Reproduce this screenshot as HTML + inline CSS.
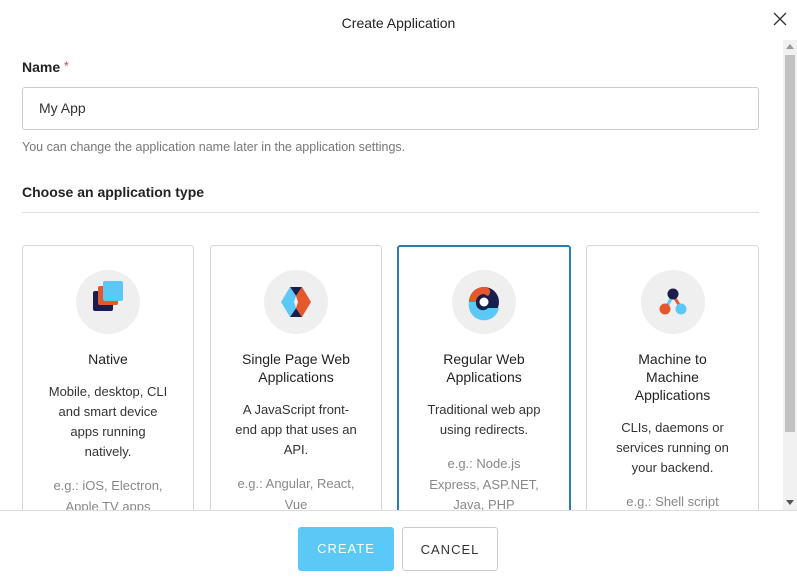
<!DOCTYPE html>
<html><head><style>
*{box-sizing:border-box;margin:0;padding:0}
body{width:797px;height:585px;background:#fff;font-family:"Liberation Sans",sans-serif;color:#333;position:relative;overflow:hidden}
.title{position:absolute;top:15px;left:0;width:797px;text-align:center;font-size:14px;color:#222}
.close{position:absolute;left:773px;top:12px}
.scroll{position:absolute;left:783px;top:40px;width:14px;height:470px;background:#f1f1f1}
.thumb{position:absolute;left:2px;top:15px;width:10px;height:377px;background:#c1c1c1}
.content{position:absolute;left:0;top:0;width:783px;height:510px;overflow:hidden}
.lbl{position:absolute;left:22px;top:59px;font-size:14px;font-weight:bold;color:#222}
.lbl span{color:#e53935;font-weight:normal;font-size:12px;vertical-align:top}
.input{position:absolute;left:22px;top:87px;width:737px;height:43px;border:1px solid #ccc;border-radius:3px;padding:0 16px;line-height:41px;font-size:14px;color:#333}
.help{position:absolute;left:22px;top:140px;font-size:12.5px;color:#777}
.h2{position:absolute;left:22px;top:184px;font-size:14px;font-weight:bold;color:#222}
.hr{position:absolute;left:22px;top:212px;width:737px;height:1px;background:#ddd}
.card{position:absolute;top:245px;height:300px;border:1px solid #d6d6d6;border-radius:3px;text-align:center;white-space:nowrap}
.card.sel{border:2px solid #2d7ca8}
.circ{width:64px;height:64px;border-radius:50%;background:#efefef;margin:24px auto 0;position:relative}
.ct{font-size:14px;color:#222;margin-top:16px;line-height:18px}
.cd{font-size:13px;color:#333;line-height:20px;margin-top:14px}
.ce{font-size:13px;color:#888;line-height:20.5px;margin-top:14px}
.foot{position:absolute;left:0;top:510px;width:797px;height:1px;background:#ddd}
.btn{position:absolute;top:527px;height:44px;width:96px;border-radius:3px;font-size:13px;letter-spacing:1px;text-align:center;line-height:44px}
</style></head><body>
<div class="content">
<div class="lbl">Name <span>*</span></div>
<div class="input">My App</div>
<div class="help">You can change the application name later in the application settings.</div>
<div class="h2">Choose an application type</div>
<div class="hr"></div>

<div class="card" style="left:22px;width:172px">
 <div class="circ"><svg width="64" height="64" viewBox="0 0 64 64"><rect x="17" y="21" width="20" height="20" rx="2" fill="#1b1d4d"/><rect x="22" y="16" width="20" height="19" rx="2" fill="#e5582d"/><rect x="27" y="11" width="20" height="20" rx="2" fill="#5cc8f5"/></svg></div>
 <div class="ct">Native</div>
 <div class="cd">Mobile, desktop, CLI<br>and smart device<br>apps running<br>natively.</div>
 <div class="ce">e.g.: iOS, Electron,<br>Apple TV apps</div>
</div>
<div class="card" style="left:210px;width:172px">
 <div class="circ"><svg width="64" height="64" viewBox="0 0 64 64"><polygon points="26,17 38,17 32,26" fill="#1b1d4d"/><polygon points="26,47 38,47 32,38" fill="#1b1d4d"/><polygon points="26,17 32,26 30,32 32,38 26,47 17,32" fill="#5cc8f5"/><polygon points="38,17 47,32 38,47 32,38 34,32 32,26" fill="#e5582d"/></svg></div>
 <div class="ct">Single Page Web<br>Applications</div>
 <div class="cd">A JavaScript front-<br>end app that uses an<br>API.</div>
 <div class="ce">e.g.: Angular, React,<br>Vue</div>
</div>
<div class="card sel" style="left:397px;width:174px">
 <div class="circ" style="margin-top:23px"><svg width="64" height="64" viewBox="0 0 64 64"><circle cx="32" cy="32" r="15" fill="#1b1d4d"/><path d="M32 17A15 15 0 0 0 17 32L24 32A8 8 0 0 1 32 24Z" fill="#e5582d"/><path d="M17 32A15 15 0 0 0 47 38L36 38A7 7 0 0 1 24 32Z" fill="#5cc8f5"/><path d="M32 17C38 17 40 22 36 26L32 24Z" fill="#e5582d"/><circle cx="32" cy="32" r="4.5" fill="#fff"/></svg></div>
 <div class="ct">Regular Web<br>Applications</div>
 <div class="cd">Traditional web app<br>using redirects.</div>
 <div class="ce">e.g.: Node.js<br>Express, ASP.NET,<br>Java, PHP</div>
</div>
<div class="card" style="left:586px;width:173px">
 <div class="circ"><svg width="64" height="64" viewBox="0 0 64 64"><line x1="32" y1="25" x2="25" y2="38" stroke="#5cc8f5" stroke-width="3"/><line x1="32" y1="25" x2="40" y2="38" stroke="#e5582d" stroke-width="3"/><circle cx="32" cy="24" r="5.5" fill="#1b1d4d"/><circle cx="24" cy="39" r="5.5" fill="#e5582d"/><circle cx="40" cy="39" r="5.5" fill="#5cc8f5"/></svg></div>
 <div class="ct">Machine to<br>Machine<br>Applications</div>
 <div class="cd">CLIs, daemons or<br>services running on<br>your backend.</div>
 <div class="ce">e.g.: Shell script</div>
</div>
</div>
<div class="title">Create Application</div>
<svg class="close" width="14" height="14" viewBox="0 0 14 14"><path d="M1 1L13 13M13 1L1 13" stroke="#333" stroke-width="1.3"/></svg>
<div class="scroll"><div class="thumb"></div>
<svg style="position:absolute;left:3px;top:4px" width="8" height="5"><polygon points="0,5 8,5 4,0" fill="#999"/></svg>
<svg style="position:absolute;left:3px;top:460px" width="8" height="5"><polygon points="0,0 8,0 4,5" fill="#555"/></svg></div>
<div class="foot"></div>
<div class="btn" style="left:298px;background:#5cc8f5;color:#fff">CREATE</div>
<div class="btn" style="left:402px;border:1px solid #ccc;color:#333">CANCEL</div>
</body></html>
